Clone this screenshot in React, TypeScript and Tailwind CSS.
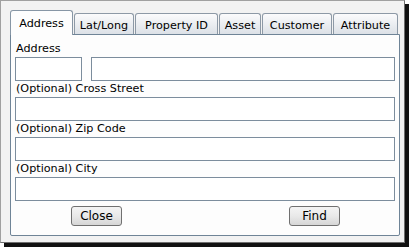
const tabs = [
  { label: "Address", w: "w-[63px]", active: true },
  { label: "Lat/Long", w: "w-[60px]" },
  { label: "Property ID", w: "w-[83px]" },
  { label: "Asset", w: "w-[42px]" },
  { label: "Customer", w: "w-[70px]" },
  { label: "Attribute", w: "w-[65px]" },
];

function Field({ label }: { label: string }) {
  return (
    <div>
      <div className="h-[16px] pl-px leading-[16px]">{label}</div>
      <input className="block h-[24px] w-[380px] border border-[#7c8d9d] bg-white outline-none" />
    </div>
  );
}

function Btn({ children }: { children: string }) {
  return (
    <button className="h-[20px] w-[51px] rounded-[3px] border border-[#707070] bg-gradient-to-b from-[#f4f4f4] via-[#e9e9e9] to-[#d6d6d6] text-[12px] leading-[18px] text-black">
      {children}
    </button>
  );
}

export default function App() {
  return (
    <div className="h-[247px] w-[410px] bg-white font-['DejaVu_Sans',sans-serif] text-[11.2px] text-black">
      <div className="h-[243px] w-[405px] border border-[#a0a0a0] border-r-[#6f6f6f] border-b-[#6f6f6f] bg-[#f2f2f2] pl-[9px] pt-[9px] shadow-[4px_4px_0_#111]">
        {/* Tab strip */}
        <div className="flex h-[24px] items-end gap-px">
          {tabs.map((t) =>
            t.active ? (
              <div
                key={t.label}
                className={`relative z-10 -mb-px h-[25px] ${t.w} rounded-t-[3px] border border-b-0 border-[#8796a5] bg-[#fdfdfd] pt-[5px] text-center leading-[16px]`}
              >
                {t.label}
              </div>
            ) : (
              <div
                key={t.label}
                className={`h-[21px] ${t.w} rounded-t-[3px] border border-b-0 border-[#8d99a6] bg-gradient-to-b from-[#fbfbfc] to-[#dce1e7] pt-[4px] text-center leading-[16px]`}
              >
                {t.label}
              </div>
            )
          )}
        </div>

        {/* Panel */}
        <div className="h-[202px] w-[390px] rounded-b-[2px] border border-[#6f8497] bg-[#fdfdfd] pl-[4px] pt-[6px]">
          <div>
            <div className="h-[16px] pl-px leading-[16px]">Address</div>
            <div className="flex gap-[9px]">
              <input className="block h-[24px] w-[67px] border border-[#7c8d9d] bg-white outline-none" />
              <input className="block h-[24px] w-[304px] border border-[#7c8d9d] bg-white outline-none" />
            </div>
          </div>
          <Field label="(Optional) Cross Street" />
          <Field label="(Optional) Zip Code" />
          <Field label="(Optional) City" />
          <div className="mt-[5px] flex w-[380px] justify-between pl-[56px] pr-[55px]">
            <Btn>Close</Btn>
            <Btn>Find</Btn>
          </div>
        </div>
      </div>
    </div>
  );
}
